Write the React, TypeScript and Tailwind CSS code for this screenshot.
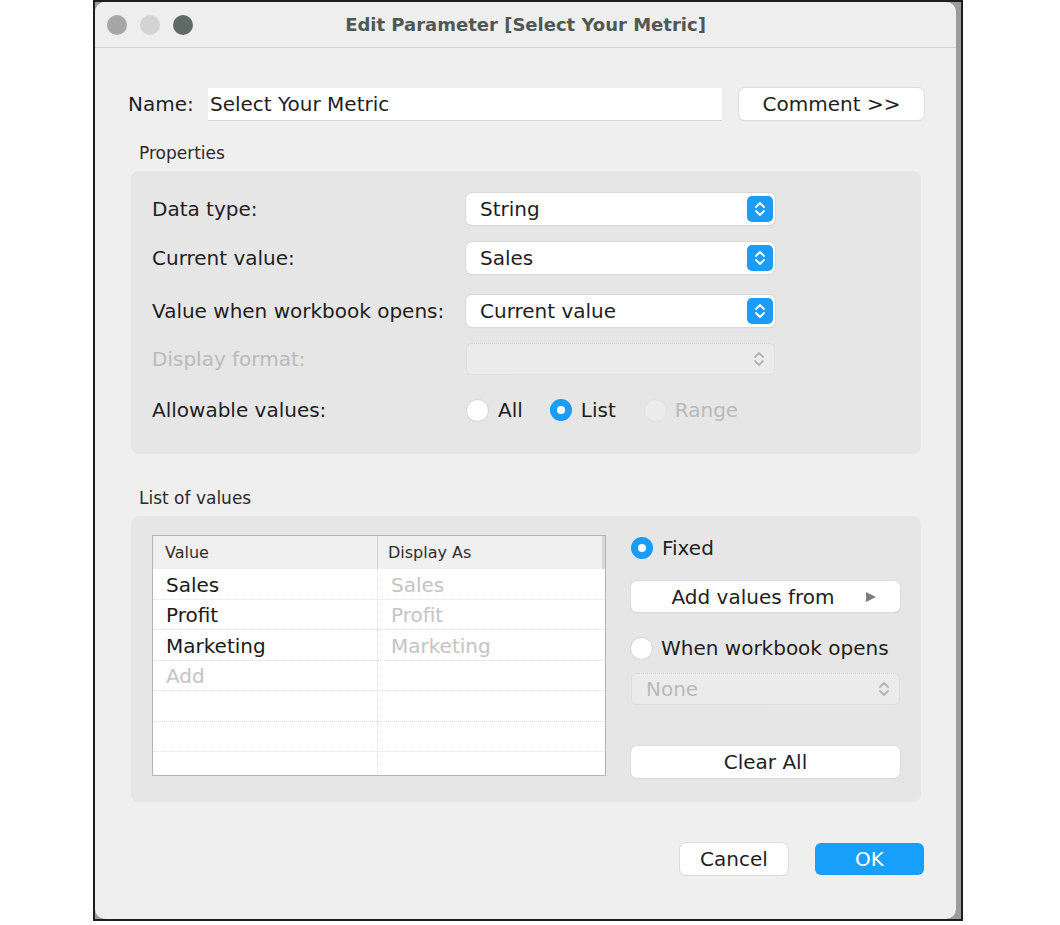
import React from "react";

const font = "font-['DejaVu_Sans',sans-serif]";

function Stepper({ disabled }: { disabled?: boolean }) {
  return (
    <div
      className={
        disabled
          ? "w-[26px] h-[26px] rounded-[5px] flex items-center justify-center"
          : "w-[26px] h-[26px] rounded-[5px] bg-[#1b9cf8] flex items-center justify-center"
      }
    >
      <svg width="12" height="18" viewBox="0 0 12 18" fill="none">
        <path
          d="M2 7 L6 3 L10 7 M2 11 L6 15 L10 11"
          stroke={disabled ? "#b4b4b4" : "#ffffff"}
          strokeWidth="1.8"
          strokeLinecap="round"
          strokeLinejoin="round"
        />
      </svg>
    </div>
  );
}

function Select({ value, disabled, width }: { value?: string; disabled?: boolean; width: string }) {
  return (
    <div
      className={`${width} h-[32px] rounded-[6px] flex items-center justify-between pl-[14px] pr-[2px] ${
        disabled
          ? "bg-[#ebebeb] border border-dotted border-[#d2d2d2] text-[#b9b9b9]"
          : "bg-white shadow-[0_0_0_1px_#d9d9d9,0_1px_1px_rgba(0,0,0,0.12)] text-[#1e1e1e]"
      }`}
    >
      <span className="text-[20px] leading-none">{value}</span>
      <Stepper disabled={disabled} />
    </div>
  );
}

function Radio({ checked, disabled }: { checked?: boolean; disabled?: boolean }) {
  if (checked) {
    return (
      <div className="w-[22px] h-[22px] rounded-full bg-[#1b9cf8] flex items-center justify-center">
        <div className="w-[8px] h-[8px] rounded-full bg-white" />
      </div>
    );
  }
  return (
    <div
      className={
        disabled
          ? "w-[21px] h-[21px] rounded-full bg-[#ececec] shadow-[0_0_0_1px_#e2e2e2]"
          : "w-[21px] h-[21px] rounded-full bg-white shadow-[0_0_0_1px_#dadada,0_1px_1px_rgba(0,0,0,0.1)]"
      }
    />
  );
}

function Button({ children, width, primary }: { children: React.ReactNode; width: string; primary?: boolean }) {
  return (
    <div
      className={`${width} h-[32px] rounded-[6px] flex items-center justify-center text-[20px] leading-none ${
        primary
          ? "bg-[#17a0fb] text-white"
          : "bg-white text-[#1e1e1e] shadow-[0_0_0_1px_#dcdcdc,0_1px_1px_rgba(0,0,0,0.12)]"
      }`}
    >
      {children}
    </div>
  );
}

const rows = [
  { v: "Sales", d: "Sales" },
  { v: "Profit", d: "Profit" },
  { v: "Marketing", d: "Marketing" },
  { v: "Add", d: "", add: true },
  { v: "", d: "" },
  { v: "", d: "" },
  { v: "", d: "" },
];

export default function App() {
  return (
    <div className={`w-[1060px] h-[925px] bg-white ${font}`}>
      <div className="ml-[93px] w-[870px] h-[921px] border-2 border-[#1e1e1e] bg-[#9c9c9c] flex">
        <div className="w-[861px] h-full rounded-[10px] bg-[#efefef] flex flex-col">
          {/* title bar */}
          <div className="h-[46px] border-b border-[#d4d4d4] rounded-t-[10px] bg-[#eeeeee] flex items-center relative">
            <div className="flex items-center gap-[13px] pl-[12px]">
              <div className="w-[20px] h-[20px] rounded-full bg-[#a6a6a6]" />
              <div className="w-[20px] h-[20px] rounded-full bg-[#d3d3d3]" />
              <div className="w-[20px] h-[20px] rounded-full bg-[#5f6a66]" />
            </div>
            <div className="absolute inset-0 flex items-center justify-center text-[18px] font-bold text-[#4f5853]">
              Edit Parameter [Select Your Metric]
            </div>
          </div>

          {/* name row */}
          <div className="mt-[40px] ml-[33px] flex items-center">
            <span className="w-[80px] text-[20px] text-[#1e1e1e]">Name:</span>
            <div className="w-[514px] h-[32px] bg-white shadow-[0_1px_0_#d6d6d6] flex items-center pl-[2px] text-[20px] text-[#1e1e1e]">
              Select Your Metric
            </div>
            <div className="ml-[17px]">
              <Button width="w-[185px]">Comment &gt;&gt;</Button>
            </div>
          </div>

          {/* properties */}
          <div className="mt-[24px] ml-[44px] h-[20px] flex items-center text-[17px] text-[#2a2a2a]">Properties</div>
          <div className="mt-[7px] ml-[36px] w-[790px] rounded-[8px] bg-[#e6e6e6] pl-[21px] pt-[22px] pb-[28px]">
            <div className="h-[32px] flex items-center">
              <span className="w-[314px] text-[20px] text-[#1e1e1e]">Data type:</span>
              <Select width="w-[309px]" value="String" />
            </div>
            <div className="mt-[17px] h-[32px] flex items-center">
              <span className="w-[314px] text-[20px] text-[#1e1e1e]">Current value:</span>
              <Select width="w-[309px]" value="Sales" />
            </div>
            <div className="mt-[21px] h-[32px] flex items-center">
              <span className="w-[314px] text-[20px] text-[#1e1e1e]">Value when workbook opens:</span>
              <Select width="w-[309px]" value="Current value" />
            </div>
            <div className="mt-[16px] h-[32px] flex items-center">
              <span className="w-[314px] text-[20px] text-[#bababa]">Display format:</span>
              <Select width="w-[309px]" disabled />
            </div>
            <div className="mt-[19px] h-[32px] flex items-center">
              <span className="w-[315px] text-[20px] text-[#1e1e1e]">Allowable values:</span>
              <div className="flex items-center">
                <Radio />
                <span className="ml-[10px] text-[20px] text-[#1e1e1e]">All</span>
              </div>
              <div className="ml-[27px] flex items-center">
                <Radio checked />
                <span className="ml-[9px] text-[20px] text-[#1e1e1e]">List</span>
              </div>
              <div className="ml-[29px] flex items-center">
                <Radio disabled />
                <span className="ml-[9px] text-[20px] text-[#bababa]">Range</span>
              </div>
            </div>
          </div>

          {/* list of values */}
          <div className="mt-[35px] ml-[44px] h-[20px] flex items-center text-[17px] text-[#2a2a2a]">List of values</div>
          <div className="mt-[7px] ml-[36px] w-[790px] rounded-[8px] bg-[#e6e6e6] pl-[21px] pr-[21px] pt-[19px] pb-[24px] flex">
            <div className="w-[454px] h-[241px] border border-[#b4b4b4] bg-white overflow-hidden flex flex-col">
              <div className="h-[33px] shrink-0 bg-[#f0f0f0] flex items-center text-[16px] text-[#2e2e2e]">
                <div className="w-[225px] h-full flex items-center pl-[12px] border-r border-[#d0d0d0]">Value</div>
                <div className="flex-1 h-full flex items-center pl-[10px]">Display As</div>
                <div className="w-[3px] h-full bg-[#d9d9d9]" />
              </div>
              {rows.map((r, i) => (
                <div key={i} className="h-[30.5px] shrink-0 flex border-b border-dotted border-[#e2e2e2]">
                  <div
                    className={`w-[225px] flex items-center pl-[13px] pt-[2px] border-r border-dotted border-[#e2e2e2] text-[20px] ${
                      r.add ? "text-[#c4c4c4]" : "text-[#1a1a1a]"
                    }`}
                  >
                    {r.v}
                  </div>
                  <div className="flex-1 flex items-center pl-[13px] pt-[2px] text-[20px] text-[#c4c4c4]">{r.d}</div>
                </div>
              ))}
            </div>

            <div className="ml-[25px] w-[269px] flex flex-col">
              <div className="h-[26px] flex items-center">
                <Radio checked />
                <span className="ml-[9px] text-[20px] text-[#1e1e1e]">Fixed</span>
              </div>
              <div className="mt-[20px] w-[269px] h-[31px] rounded-[6px] bg-white shadow-[0_0_0_1px_#dcdcdc,0_1px_1px_rgba(0,0,0,0.12)] flex items-center text-[20px] text-[#1e1e1e]">
                <span className="flex-1 text-center pl-[10px]">Add values from</span>
                <svg width="12" height="12" viewBox="0 0 12 12" className="mr-[23px]">
                  <path d="M1 1 L11 6 L1 11 Z" fill="#7e7e7e" />
                </svg>
              </div>
              <div className="mt-[23px] h-[26px] flex items-center">
                <Radio />
                <span className="ml-[9px] text-[20px] text-[#1e1e1e]">When workbook opens</span>
              </div>
              <div className="mt-[12px]">
                <Select width="w-[269px]" value="None" disabled />
              </div>
              <div className="mt-[41px]">
                <Button width="w-[269px]">Clear All</Button>
              </div>
            </div>
          </div>

          {/* footer buttons */}
          <div className="mt-[41px] ml-auto mr-[32px] flex items-center gap-[27px]">
            <Button width="w-[108px]">Cancel</Button>
            <Button width="w-[109px]" primary>
              OK
            </Button>
          </div>
        </div>
      </div>
    </div>
  );
}
